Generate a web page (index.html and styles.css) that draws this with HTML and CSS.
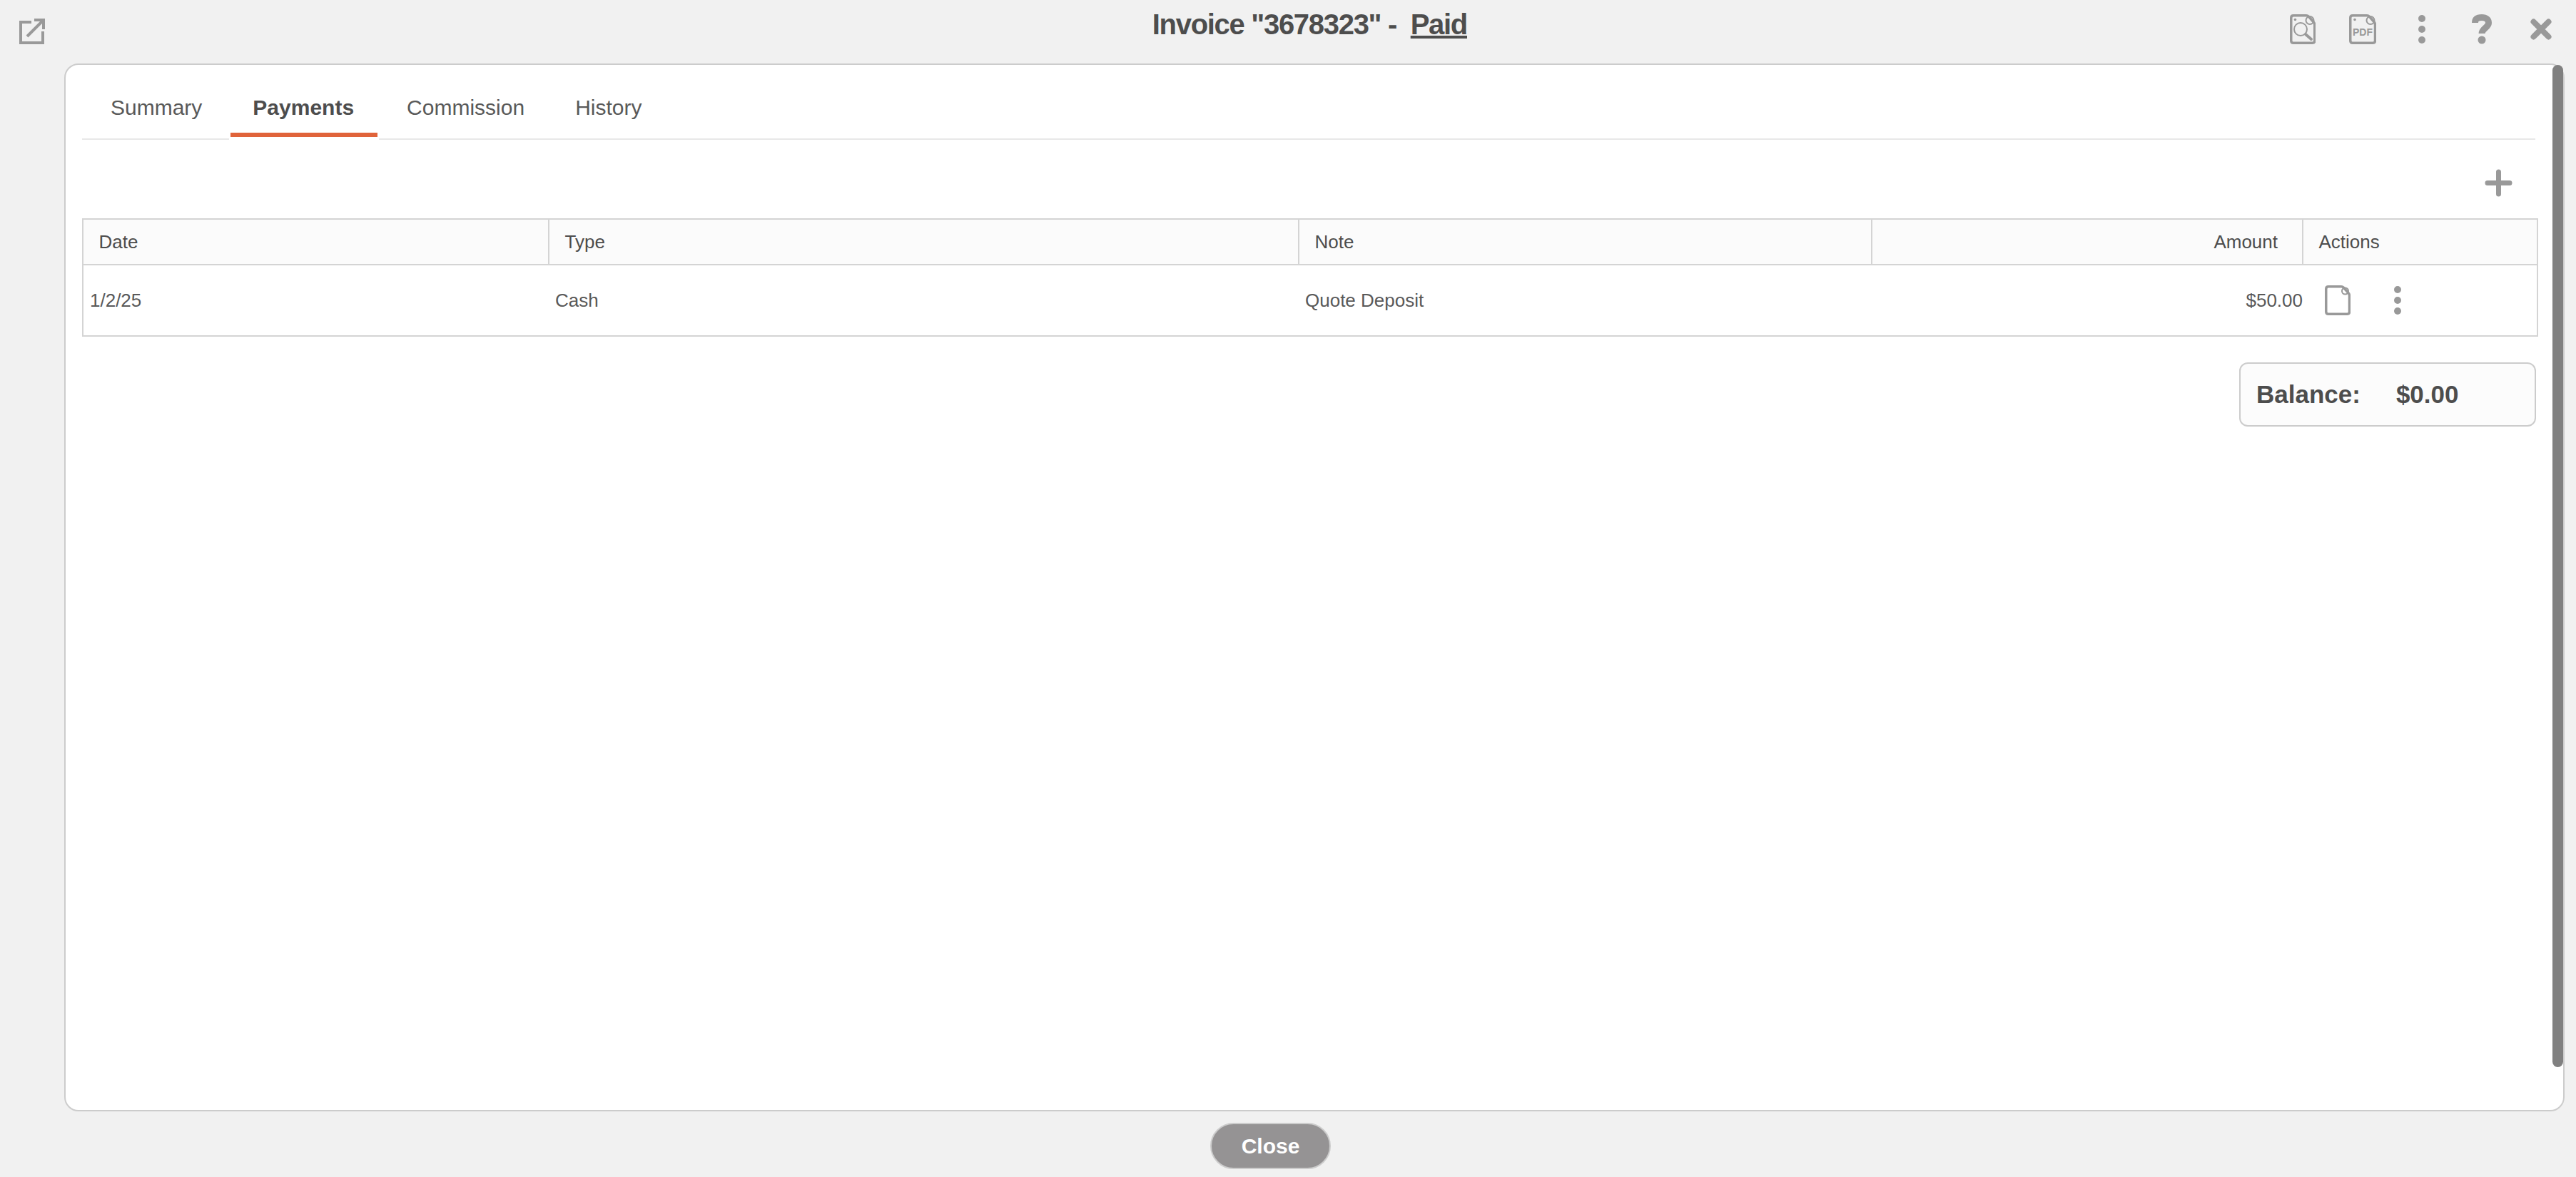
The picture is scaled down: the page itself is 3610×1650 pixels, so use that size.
FILE: index.html
```html
<!DOCTYPE html>
<html lang="en">
<head>
    <meta charset="UTF-8">
    <title>Invoice 3678323 - Payments</title>
    <link rel="stylesheet" href="styles.css">
</head>
<body>
    <header class="header">
        <a class="popout" href="#">
            <svg width="36" height="36" viewBox="0 0 36 36"><path class="line-thin" d="M17 5H2v29h31V18M11 25 33 3M21 2h13v13"/></svg>
        </a>
        <h1>Invoice "3678323" -&nbsp; <u>Paid</u></h1>
        <nav class="toolbar">
            <a class="tool" href="#">
                <svg width="36" height="42" viewBox="0 0 36 42">
                    <path class="doc" d="M5 1.750h18q2 0 3.500 1.500l7 8q1.250 1.500 1.250 3.500V37q0 3.250-3.250 3.250H5q-3.250 0-3.250-3.250V5Q1.750 1.750 5 1.750Z"/>
                    <circle class="fold" cx="28" cy="8.500" r="5.500"/>
                    <circle class="fill" cx="7.500" cy="7.500" r="1.800"/>
                    <circle class="fold" cx="15" cy="21" r="9"/>
                    <path class="handle" d="M22 28l8 7"/>
                </svg>
            </a>
            <a class="tool" href="#">
                <svg width="38" height="42" viewBox="0 0 38 42">
                    <path class="doc" d="M5 1.750h20q2 0 3.500 1.500l7 8q1 1.500 1 3.500V37q0 3.250-3.250 3.250H5q-3.250 0-3.250-3.250V5Q1.750 1.750 5 1.750Z"/>
                    <circle class="fold" cx="30" cy="8.500" r="5.500"/>
                    <circle class="fill" cx="8" cy="7.500" r="1.800"/>
                    <text class="pdf" x="19" y="30">PDF</text>
                </svg>
            </a>
            <a class="tool" href="#">
                <svg width="10" height="40" viewBox="0 0 10 40"><circle class="fill" cx="5" cy="5" r="5"/><circle class="fill" cx="5" cy="20" r="5"/><circle class="fill" cx="5" cy="35" r="5"/></svg>
            </a>
            <a class="tool" href="#">
                <svg width="28" height="42" viewBox="0 0 28 42"><path class="line-question" d="M4.500 12C4.500 6 9 4.500 14 4.500c6 0 9.500 3 9.500 7.500 0 7-9.500 7.500-9.500 15"/><circle class="fill" cx="14" cy="36" r="5.500"/></svg>
            </a>
            <a class="tool" href="#">
                <svg width="30" height="30" viewBox="0 0 30 30"><path class="line-heavy" d="M4.500 4.500l21 21M25.500 4.500l-21 21"/></svg>
            </a>
        </nav>
    </header>

    <main class="card">
        <ul class="tabs">
            <li><a href="#">Summary</a></li>
            <li class="active"><a href="#">Payments</a></li>
            <li><a href="#">Commission</a></li>
            <li><a href="#">History</a></li>
        </ul>

        <div class="add-row">
            <a href="#" class="add-btn">
                <svg width="39" height="39" viewBox="0 0 39 39"><path class="line-plus" d="M19.500 4v31M4 19.500h31"/></svg>
            </a>
        </div>

        <table>
            <colgroup>
                <col class="col-date">
                <col class="col-type">
                <col class="col-note">
                <col class="col-amount">
                <col class="col-actions">
            </colgroup>
            <thead>
                <tr>
                    <th>Date</th>
                    <th>Type</th>
                    <th>Note</th>
                    <th class="num">Amount</th>
                    <th>Actions</th>
                </tr>
            </thead>
            <tbody>
                <tr>
                    <td>1/2/25</td>
                    <td>Cash</td>
                    <td>Quote Deposit</td>
                    <td class="num">$50.00</td>
                    <td>
                        <div class="row-actions">
                            <svg width="36" height="42" viewBox="0 0 36 42">
                                <path class="doc" d="M5 1.750h18q2 0 3.500 1.500l7 8q1 1.500 1 3.500V37q0 3.250-3.250 3.250H5q-3.250 0-3.250-3.250V5Q1.750 1.750 5 1.750Z"/>
                                <circle class="fold" cx="28.500" cy="8" r="4.500"/>
                            </svg>
                            <svg width="10" height="40" viewBox="0 0 10 40"><circle class="fill" cx="5" cy="5" r="5"/><circle class="fill" cx="5" cy="20" r="5"/><circle class="fill" cx="5" cy="35" r="5"/></svg>
                        </div>
                    </td>
                </tr>
            </tbody>
        </table>

        <div class="balance">
            <span>Balance:</span>
            <span>$0.00</span>
        </div>

        <div class="scroll-thumb"></div>
    </main>

    <footer class="footer">
        <button class="close-btn">Close</button>
    </footer>
</body>
</html>
```

FILE: styles.css
```css
/* Common */
:root {
    --bg-color: #f1f1f1;
    --text-color: #4d4d4d;
    --light-text: #595959;
    --icon-color: #999;
    --border-color: #ccc;
    --accent-color: #e0633a;
}
* { box-sizing: border-box; }
html, body { height: 100%; }
body {
    display: flex;
    flex-direction: column;
    margin: 0;
    background-color: var(--bg-color);
    color: var(--text-color);
    font-family: 'Liberation Sans', Arial, sans-serif;
    overflow: hidden;
}
a { color: inherit; text-decoration: none; }
svg { display: block; }

/* Icon parts */
.doc { fill: none; stroke: var(--icon-color); stroke-width: 3.500; }
.fold { fill: none; stroke: var(--icon-color); stroke-width: 2; }
.fill { fill: var(--icon-color); }
.handle { fill: none; stroke: var(--icon-color); stroke-width: 4; stroke-linecap: round; }
.pdf { fill: var(--icon-color); font-size: 14px; font-weight: 700; text-anchor: middle; }
.line-thin { fill: none; stroke: #999; stroke-width: 4; }
.line-heavy { fill: none; stroke: var(--icon-color); stroke-width: 8; stroke-linecap: round; }
.line-question { fill: none; stroke: var(--icon-color); stroke-width: 9; }
.line-plus { fill: none; stroke: var(--icon-color); stroke-width: 7; stroke-linecap: round; }

/* Header */
.header {
    display: grid;
    grid-template-columns: 1fr auto 1554px;
    height: 89px;
    flex-shrink: 0;
    padding-left: 27px;
}
.popout { align-self: start; margin-top: 26px; width: 36px; }
.header h1 {
    margin: 0;
    padding-top: 11px;
    font-size: 40px;
    line-height: 46px;
    font-weight: 700;
    letter-spacing: -1.300px;
}
.toolbar {
    display: flex;
    justify-content: flex-end;
    align-items: center;
    padding: 0 7px 8px 0;
}
.tool {
    display: flex;
    justify-content: center;
    width: 83.500px;
}

/* Card */
.card {
    position: relative;
    flex: 1;
    margin: 0 16px 0 90px;
    padding: 0 37px 0 23px;
    background-color: #fff;
    border: 2px solid var(--border-color);
    border-radius: 20px;
}
.scroll-thumb {
    position: absolute;
    top: 0;
    right: 0;
    width: 15px;
    height: 1405px;
    border-radius: 8px;
    background-color: #808080;
}

/* Tabs */
.tabs {
    display: flex;
    gap: 11px;
    height: 105px;
    margin: 0 2px 0 0;
    padding: 0 0 0 10px;
    list-style: none;
    border-bottom: 2px solid #e8e8e8;
}
.tabs li { height: 105px; }
.tabs a {
    display: block;
    height: 101px;
    padding: 37px 30px 0;
    font-size: 30px;
    line-height: 46px;
    color: var(--light-text);
}
.tabs li.active {
    margin: 0 -2px 0 -3px;
    padding: 0 2px;
    background-color: #fff;
}
.tabs li.active a {
    padding: 37px 33px 0 31px;
    font-weight: 700;
    color: var(--text-color);
    border-bottom: 6px solid var(--accent-color);
}

.add-row {
    display: flex;
    justify-content: flex-end;
    align-items: center;
    height: 110px;
    padding: 10px 34px 0 0;
}

/* Table */
table {
    width: 3440px;
    table-layout: fixed;
    border-collapse: collapse;
    border: 2px solid #d4d4d4;
    font-size: 26px;
    color: var(--light-text);
}
.col-date { width: 653px; }
.col-type { width: 1051px; }
.col-note { width: 803px; }
.col-amount { width: 604px; }
.col-actions { width: 329px; }
th, td { text-align: left; font-weight: 400; }
th {
    height: 64px;
    padding: 0 21.500px;
    background-color: #fbfbfb;
    border: 2px solid #d4d4d4;
    color: var(--text-color);
}
th.num { padding-right: 34px; text-align: right; }
td { height: 100px; padding: 0 0 0 9px; }
td.num { text-align: right; }
.row-actions {
    display: flex;
    align-items: center;
    gap: 61px;
    padding-left: 22px;
}

/* Balance */
.balance {
    display: flex;
    align-items: center;
    gap: 50px;
    width: 416px;
    height: 90px;
    margin: 36px 1px 0 auto;
    padding-left: 22px;
    background-color: #fcfcfc;
    border: 2px solid var(--border-color);
    border-radius: 12px;
    font-size: 35px;
    font-weight: 700;
}

/* Footer */
.footer {
    display: flex;
    justify-content: center;
    flex-shrink: 0;
    height: 92px;
    padding: 16px 49px 0 0;
}
.close-btn {
    width: 169px;
    height: 65px;
    padding: 0;
    background-color: #959394;
    border: 2px solid var(--border-color);
    border-radius: 33px;
    color: #fff;
    font-family: inherit;
    font-size: 30px;
    font-weight: 700;
}
```
